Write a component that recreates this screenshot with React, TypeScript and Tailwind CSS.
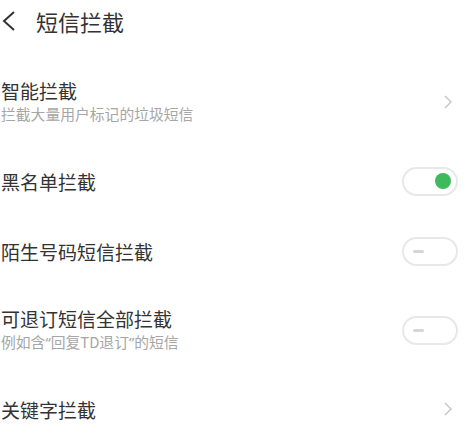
import React from "react";

const Chevron = () => (
  <svg width="10" height="14" viewBox="0 0 10 14" className="mr-[17px]">
    <path d="M2 1 L8 7 L2 13" fill="none" stroke="#c4c4c4" strokeWidth="1.4" />
  </svg>
);

const ToggleOn = () => (
  <div className="w-[56px] h-[29px] rounded-full border-2 border-[#e8e8e8] flex items-center justify-end pr-[5px] mr-[12px]">
    <div className="w-[16px] h-[16px] rounded-full bg-[#3cba5c]" />
  </div>
);

const ToggleOff = () => (
  <div className="w-[56px] h-[29px] rounded-full border-2 border-[#e8e8e8] flex items-center pl-[9px] mr-[12px]">
    <div className="w-[11px] h-[3px] rounded-full bg-[#d6d6d6]" />
  </div>
);

const Row = ({
  title,
  sub,
  right,
}: {
  title: string;
  sub?: React.ReactNode;
  right: React.ReactNode;
}) => (
  <div
    className={`flex items-center justify-between ${sub ? "h-[88px]" : "h-[70px]"}`}
  >
    <div className="flex flex-col pl-[1px]">
      <div className="text-[19px] leading-[23px] text-[#333333]">{title}</div>
      {sub && (
        <div className="text-[14.8px] leading-[23px] text-[#a6a6a6]">{sub}</div>
      )}
    </div>
    {right}
  </div>
);

export default function App() {
  return (
    <div
      className="w-[470px] h-[442px] bg-white overflow-hidden"
      style={{ fontFamily: '"Noto Sans CJK SC", "Noto Sans", sans-serif' }}
    >
      <div className="h-[42px] flex items-center">
        <svg width="16" height="22" viewBox="0 0 16 22" className="ml-[1px]">
          <path d="M13 2 L3 11 L13 20" fill="none" stroke="#333" strokeWidth="2" />
        </svg>
        <div className="ml-[19px] text-[22px] leading-[30px] text-[#333333]">短信拦截</div>
      </div>
      <div className="pt-[16px]">
        <Row title="智能拦截" sub="拦截大量用户标记的垃圾短信" right={<Chevron />} />
        <Row title="黑名单拦截" right={<ToggleOn />} />
        <Row title="陌生号码短信拦截" right={<ToggleOff />} />
        <Row
          title="可退订短信全部拦截"
          sub={
            <>
              例如含<span className="font-['Noto_Sans']">“</span>回复TD退订
              <span className="font-['Noto_Sans']">”</span>的短信
            </>
          }
          right={<ToggleOff />}
        />
        <Row title="关键字拦截" right={<Chevron />} />
      </div>
    </div>
  );
}
